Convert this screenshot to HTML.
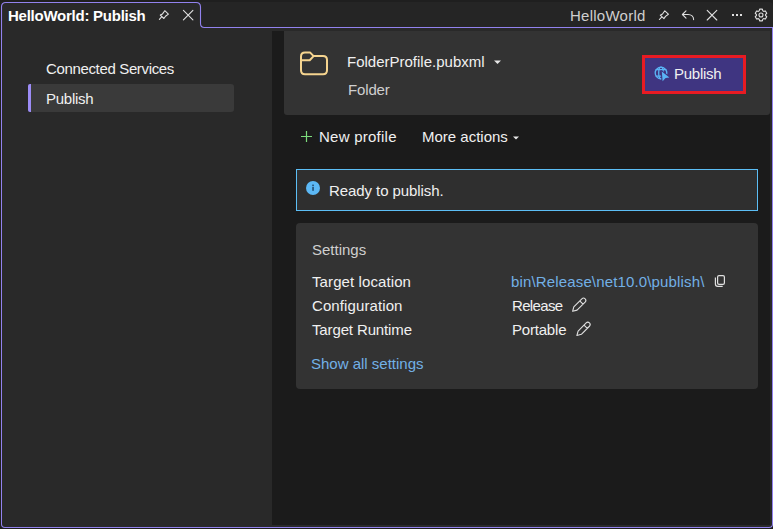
<!DOCTYPE html>
<html><head><meta charset="utf-8">
<style>
*{box-sizing:border-box;margin:0;padding:0}
html,body{width:773px;height:529px;overflow:hidden;background:#1f1f1f;font-family:"Liberation Sans",sans-serif;color:#f0f0f0}
.abs{position:absolute}
#frame{position:absolute;left:1px;top:27px;width:772px;height:501px;border:1px solid #9282ee;border-top:none;border-radius:0 0 4px 4px;background:#292929}
#topline{position:absolute;left:200px;top:27px;width:573px;height:1px;background:#9282ee}
#strip{position:absolute;left:1px;top:2px;width:772px;height:26px;background:#252525;border-radius:0 4px 0 0}
#tab{position:absolute;left:0;top:0;width:773px;height:40px}
.t{position:absolute;white-space:nowrap;font-size:15px;line-height:17px}
</style></head><body>
<div id="strip"></div>
<div id="frame"></div>
<div class="abs" style="left:1.5px;top:2.5px;width:199px;height:27px;background:#292929;border-radius:4.5px 4.5px 0 0"></div>
<svg id="tab" width="773" height="40"><path d="M1.5 40 V7 Q1.5 2.5 6 2.5 H196 Q200.5 2.5 200.5 7 V23.5 Q200.5 27.5 204.5 27.5 H773" fill="none" stroke="#9282ee" stroke-width="1.1"/></svg>
<div class="t" id="t1" style="left:8px;top:7px;letter-spacing:-0.25px;font-weight:bold;color:#fff">HelloWorld: Publish</div>
<div class="t" id="t2" style="left:570px;top:7px;letter-spacing:0.25px;color:#cfcfcf">HelloWorld</div>

<!-- left nav -->
<div class="abs" style="left:28px;top:84px;width:206px;height:28px;background:#3a3a3a;border-radius:3px"></div>
<div class="abs" style="left:28px;top:84px;width:3px;height:28px;background:#9c8cf6;border-radius:2px 0 0 2px"></div>
<div class="t" id="t3" style="left:46px;top:60px;letter-spacing:-0.35px">Connected Services</div>
<div class="t" id="t4" style="left:46px;top:90px;letter-spacing:-0.25px">Publish</div>

<!-- right content -->
<div class="abs" style="left:272px;top:31px;width:498px;height:494px;background:#1b1b1b"></div>
<div class="abs" style="left:284px;top:31px;width:486px;height:84px;background:#333;border-radius:0 0 3px 3px"></div>
<div class="t" id="t5" style="left:347px;top:53px">FolderProfile.pubxml</div>
<div class="t" id="t6" style="left:348px;top:81px;letter-spacing:-0.15px;color:#cfcfcf">Folder</div>

<div class="abs" style="left:642px;top:55px;width:104px;height:39px;border:3px solid #e81b23;background:#3f3581"></div>
<div class="t" id="t7" style="left:674px;top:65px;letter-spacing:-0.25px">Publish</div>

<div class="t" id="t8" style="left:319px;top:128px;letter-spacing:0.25px">New profile</div>
<div class="t" id="t9" style="left:422px;top:128px">More actions</div>

<div class="abs" style="left:296px;top:169px;width:462px;height:42px;border:1px solid #5cbef5;background:#2f2f2f"></div>
<div class="t" id="t10" style="left:329px;top:182px;letter-spacing:-0.08px">Ready to publish.</div>

<div class="abs" style="left:296px;top:223px;width:462px;height:166px;background:#333;border-radius:4px"></div>
<div class="t" id="t11" style="left:312px;top:241px;color:#cfcfcf">Settings</div>
<div class="t" id="t12" style="left:312px;top:273px;letter-spacing:0.1px">Target location</div>
<div class="t" id="t13" style="left:312px;top:297px;letter-spacing:0.1px">Configuration</div>
<div class="t" id="t14" style="left:312px;top:321px;letter-spacing:-0.13px">Target Runtime</div>
<div class="t" id="t15" style="left:511px;top:273px;letter-spacing:0.15px;color:#72b0e6">bin\Release\net10.0\publish\</div>
<div class="t" id="t16" style="left:512px;top:297px;letter-spacing:-0.65px">Release</div>
<div class="t" id="t17" style="left:512px;top:321px;letter-spacing:-0.2px">Portable</div>
<div class="t" id="t18" style="left:311px;top:355px;color:#72b0e6">Show all settings</div>
<svg class="abs" style="left:0;top:0" width="773" height="529" viewBox="0 0 773 529" fill="none">
<!-- tab pin -->
<g id="pin" stroke="#e0e0e0" stroke-width="1.1" stroke-linejoin="round" stroke-linecap="round">
<path d="M164.8 10.7 L168.4 14.1 L165.5 16.3 L163.9 18.5 L160.3 15.1 L162.5 13.9 Z M161.4 17.2 L159.4 19.4"/>
</g>
<path d="M183.4 10.4 L192.9 19.9 M192.9 10.4 L183.4 19.9" stroke="#e0e0e0" stroke-width="1.1" stroke-linecap="round"/>
<!-- top right pin -->
<g stroke="#e0e0e0" stroke-width="1.1" stroke-linejoin="round" stroke-linecap="round" transform="translate(500,0.1)">
<path d="M164.8 10.7 L168.4 14.1 L165.5 16.3 L163.9 18.5 L160.3 15.1 L162.5 13.9 Z M161.4 17.2 L159.4 19.4"/>
</g>
<!-- undo -->
<path d="M686 10.9 L682.4 14.5 L686 18.1 M682.6 14.5 H688 C691.3 14.5 693.6 16.6 693.6 19.6" stroke="#e0e0e0" stroke-width="1.1" stroke-linecap="round" stroke-linejoin="round"/>
<!-- close -->
<path d="M707.2 10.4 L716.8 20 M716.8 10.4 L707.2 20" stroke="#e0e0e0" stroke-width="1.1" stroke-linecap="round"/>
<!-- dots -->
<rect x="732" y="14" width="2" height="2" fill="#e0e0e0"/><rect x="736" y="14" width="2" height="2" fill="#e0e0e0"/><rect x="740" y="14" width="2" height="2" fill="#e0e0e0"/>
<!-- gear -->
<path d="M759.17 10.89 L759.65 9.15 L762.35 9.15 L762.83 10.89 L763.65 11.36 L765.39 10.91 L766.74 13.25 L765.48 14.53 L765.48 15.47 L766.74 16.75 L765.39 19.09 L763.65 18.64 L762.83 19.11 L762.35 20.85 L759.65 20.85 L759.17 19.11 L758.35 18.64 L756.61 19.09 L755.26 16.75 L756.52 15.47 L756.52 14.53 L755.26 13.25 L756.61 10.91 L758.35 11.36 Z" stroke="#e0e0e0" stroke-width="1.1" stroke-linejoin="round"/>
<circle cx="761" cy="15" r="2" stroke="#e0e0e0" stroke-width="1.1"/>
<!-- folder -->
<path d="M301 56.4 Q301 52.4 305 52.4 H310 L313.6 56.1 H323 Q327 56.1 327 60.1 V70.2 Q327 74.2 323 74.2 H305 Q301 74.2 301 70.2 Z M301 60.3 H309.7 L313.6 56.1" stroke="#f5d48f" stroke-width="2" stroke-linejoin="round"/>
<!-- caret folder profile -->
<path d="M494 60.5 H501 L497.5 64 Z" fill="#e8e8e8"/>
<!-- globe -->
<g stroke="#5ab4f5" stroke-width="1.3">
<circle cx="661" cy="73" r="5.8"/>
<path d="M655.5 69.7 H666.5 M655.5 76.1 H662"/>
<ellipse cx="661" cy="73" rx="2.3" ry="5.8"/>
</g>
<path d="M661.8 71.6 L669.4 77.4 L665.6 78 L662.6 81.2 Z" fill="#5ab4f5" stroke="#3f3581" stroke-width="2.2" stroke-linejoin="round" paint-order="stroke"/>
<!-- plus -->
<path d="M306.5 131 V142 M301 136.5 H312" stroke="#7ddc7d" stroke-width="1.2"/>
<!-- caret more actions -->
<path d="M513 136.6 H519 L516 139.4 Z" fill="#e8e8e8"/>
<!-- info -->
<circle cx="313" cy="188" r="7" fill="#5cb8f5"/>
<rect x="312.1" y="184.6" width="1.9" height="1.6" fill="#2c5d85"/>
<rect x="312.1" y="187" width="1.9" height="3.8" fill="#2c5d85"/>
<!-- copy -->
<path d="M719 275.6 H723 Q724.4 275.6 724.4 277 V283 Q724.4 284.4 723 284.4 H719 Q717.6 284.4 717.6 283 V277 Q717.6 275.6 719 275.6 Z M715.4 277.4 V284 Q715.4 286.4 717.8 286.4 H722.7" stroke="#e0e0e0" stroke-width="1.2"/>
<!-- pencils -->
<path d="M0 0 L4 -2.3 H15.4 A2.3 2.3 0 0 1 15.4 2.3 H4 Z M12.4 -2.3 V2.3" stroke="#e0e0e0" stroke-width="1.1" stroke-linejoin="round" transform="translate(572.6 311.3) rotate(-45)"/>
<path d="M0 0 L4 -2.3 H15.4 A2.3 2.3 0 0 1 15.4 2.3 H4 Z M12.4 -2.3 V2.3" stroke="#e0e0e0" stroke-width="1.1" stroke-linejoin="round" transform="translate(576.9 335.5) rotate(-45)"/>
</svg>
</body></html>
